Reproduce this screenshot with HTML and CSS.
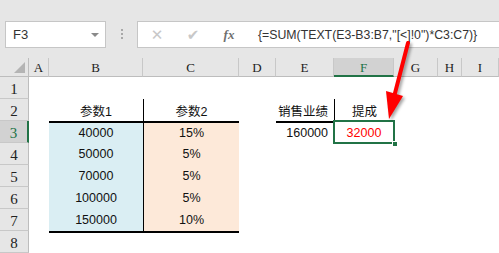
FILE: index.html
```html
<!DOCTYPE html>
<html lang="zh-CN">
<head>
  <meta charset="UTF-8" />
  <title>TEXT 提成计算</title>
  <link rel="stylesheet" href="styles.css">
</head>
<body>
  <div class="formula-bar">
    <div class="name-box">
      <span>F3</span>
      <span class="drop"></span>
    </div>
    <div class="grip"></div>
    <div class="fx-box">
      <span class="fx-icon cancel">&#x2715;</span>
      <span class="fx-icon enter">&#x2714;</span>
      <span class="fx-icon fx">fx</span>
      <span class="formula">{=SUM(TEXT(E3-B3:B7,"[&lt;]!0")*C3:C7)}</span>
    </div>
  </div>

  <div class="sheet">
    <div class="corner"><span class="tri"></span></div>
    <div class="ch">A</div>
    <div class="ch">B</div>
    <div class="ch">C</div>
    <div class="ch">D</div>
    <div class="ch">E</div>
    <div class="ch active">F</div>
    <div class="ch">G</div>
    <div class="ch">H</div>
    <div class="ch">I</div>

    <div class="rh">1</div>
    <div></div><div></div><div></div><div></div><div></div><div></div><div></div><div></div><div></div>

    <div class="rh">2</div>
    <div></div>
    <div class="cell center">参数1</div>
    <div class="cell center split">参数2</div>
    <div></div>
    <div class="cell right">销售业绩</div>
    <div class="cell center split">提成</div>
    <div></div><div></div><div></div>

    <div class="rh active">3</div>
    <div></div>
    <div class="cell center blue top">40000</div>
    <div class="cell center peach split top">15%</div>
    <div></div>
    <div class="cell right top">160000</div>
    <div class="cell center red selected">32000<span class="handle"></span></div>
    <div></div><div></div><div></div>

    <div class="rh">4</div>
    <div></div>
    <div class="cell center blue">50000</div>
    <div class="cell center peach split">5%</div>
    <div></div><div></div><div></div><div></div><div></div><div></div>

    <div class="rh">5</div>
    <div></div>
    <div class="cell center blue">70000</div>
    <div class="cell center peach split">5%</div>
    <div></div><div></div><div></div><div></div><div></div><div></div>

    <div class="rh">6</div>
    <div></div>
    <div class="cell center blue">100000</div>
    <div class="cell center peach split">5%</div>
    <div></div><div></div><div></div><div></div><div></div><div></div>

    <div class="rh">7</div>
    <div></div>
    <div class="cell center blue">150000</div>
    <div class="cell center peach split">10%</div>
    <div></div><div></div><div></div><div></div><div></div><div></div>

    <div class="rh">8</div>
    <div></div>
    <div class="cell top"></div>
    <div class="cell top"></div>
    <div></div><div></div><div></div><div></div><div></div><div></div>
  </div>

  <svg class="arrow" width="499" height="253" viewBox="0 0 499 253">
    <line x1="408" y1="43" x2="394" y2="97" stroke="#ff0000" stroke-width="4" stroke-linecap="round"/>
    <polygon points="389,119 386,91 403,96" fill="#ff0000"/>
  </svg>
</body>
</html>
```

FILE: styles.css
```css
* {
  box-sizing: border-box;
}

body {
  margin: 0;
  width: 499px;
  height: 253px;
  overflow: hidden;
  background: #ffffff;
  font-family: "Liberation Sans", "Noto Sans CJK SC", sans-serif;
  position: relative;
}

.formula-bar {
  height: 58px;
  background: #e6e6e6;
  display: flex;
  align-items: flex-start;
  padding-top: 21px;
  padding-left: 5px;
}

.name-box {
  width: 101px;
  height: 27px;
  background: #fff;
  border: 1px solid #c6c6c6;
  display: flex;
  align-items: center;
  justify-content: space-between;
  padding: 0 6px 0 7px;
  font-size: 13px;
  color: #333;
}

.drop {
  width: 0;
  height: 0;
  border-left: 4px solid transparent;
  border-right: 4px solid transparent;
  border-top: 4px solid #8a8a8a;
}

.grip {
  width: 2px;
  height: 12px;
  margin: 7px 14px 0 15px;
  background: radial-gradient(circle, #a8a8a8 0.8px, transparent 1.2px) 0 0 / 2px 4px;
}

.fx-box {
  flex: 1;
  height: 27px;
  margin-right: -10px;
  background: #fff;
  border: 1px solid #c6c6c6;
  display: flex;
  align-items: center;
  white-space: nowrap;
}

.fx-icon {
  width: 36px;
  text-align: center;
  color: #c8c8c8;
  font-size: 13px;
}

.cancel {
  margin-left: 1px;
  font-family: "DejaVu Sans", sans-serif;
  font-size: 15px;
}

.enter {
  font-family: "DejaVu Sans", sans-serif;
  font-size: 15px;
}

.fx {
  color: #6f6f6f;
  font-family: "Liberation Serif", serif;
  font-style: italic;
  font-weight: bold;
  font-size: 13px;
}

.formula {
  margin-left: 11px;
  font-size: 12.3px;
  color: #333;
}

.sheet {
  display: grid;
  grid-template-columns: 29px 20px 94px 96px 37px 58px 60px 44px 24px 37px;
  grid-template-rows: 19px repeat(8, 22px);
}

.corner {
  background: #e6e6e6;
  border-right: 1px solid #bdbdbd;
  border-bottom: 1px solid #bdbdbd;
  position: relative;
}

.tri {
  position: absolute;
  right: 3px;
  bottom: 3px;
  width: 0;
  height: 0;
  border-left: 11px solid transparent;
  border-bottom: 11px solid #b4b4b4;
}

.ch {
  background: #e6e6e6;
  border-right: 1px solid #c8c8c8;
  border-bottom: 1px solid #bdbdbd;
  font-family: "Liberation Serif", serif;
  font-size: 13px;
  color: #222;
  display: flex;
  align-items: center;
  justify-content: center;
  padding-top: 2px;
}

.ch.active {
  background: #d2d2d2;
  color: #217346;
  border-bottom: 2px solid #217346;
}

.rh {
  background: #e6e6e6;
  border-right: 1px solid #bdbdbd;
  border-bottom: 1px solid #c8c8c8;
  font-family: "Liberation Serif", serif;
  font-size: 15px;
  color: #222;
  display: flex;
  align-items: center;
  justify-content: center;
  padding-top: 3px;
}

.rh.active {
  background: #d2d2d2;
  color: #217346;
  border-right: 2px solid #217346;
}

.cell {
  font-size: 12.5px;
  color: #111;
  display: flex;
  align-items: center;
  position: relative;
  white-space: nowrap;
}

.center {
  justify-content: center;
}

.right {
  justify-content: flex-end;
  padding-right: 6px;
}

.blue {
  background: #daeef3;
}

.peach {
  background: #fde9d9;
}

.split {
  border-left: 1px solid #000;
}

.top {
  border-top: 2px solid #000;
}

.red {
  color: #ff0000;
}

.selected {
  outline: 2px solid #217346;
  outline-offset: -1px;
  padding-top: 1px;
}

.handle {
  position: absolute;
  right: -4px;
  bottom: -4px;
  width: 6px;
  height: 6px;
  background: #217346;
  border: 1px solid #fff;
}

.arrow {
  position: absolute;
  left: 0;
  top: 0;
  filter: drop-shadow(2px 2px 1.5px rgba(0, 0, 0, 0.35));
}
```
